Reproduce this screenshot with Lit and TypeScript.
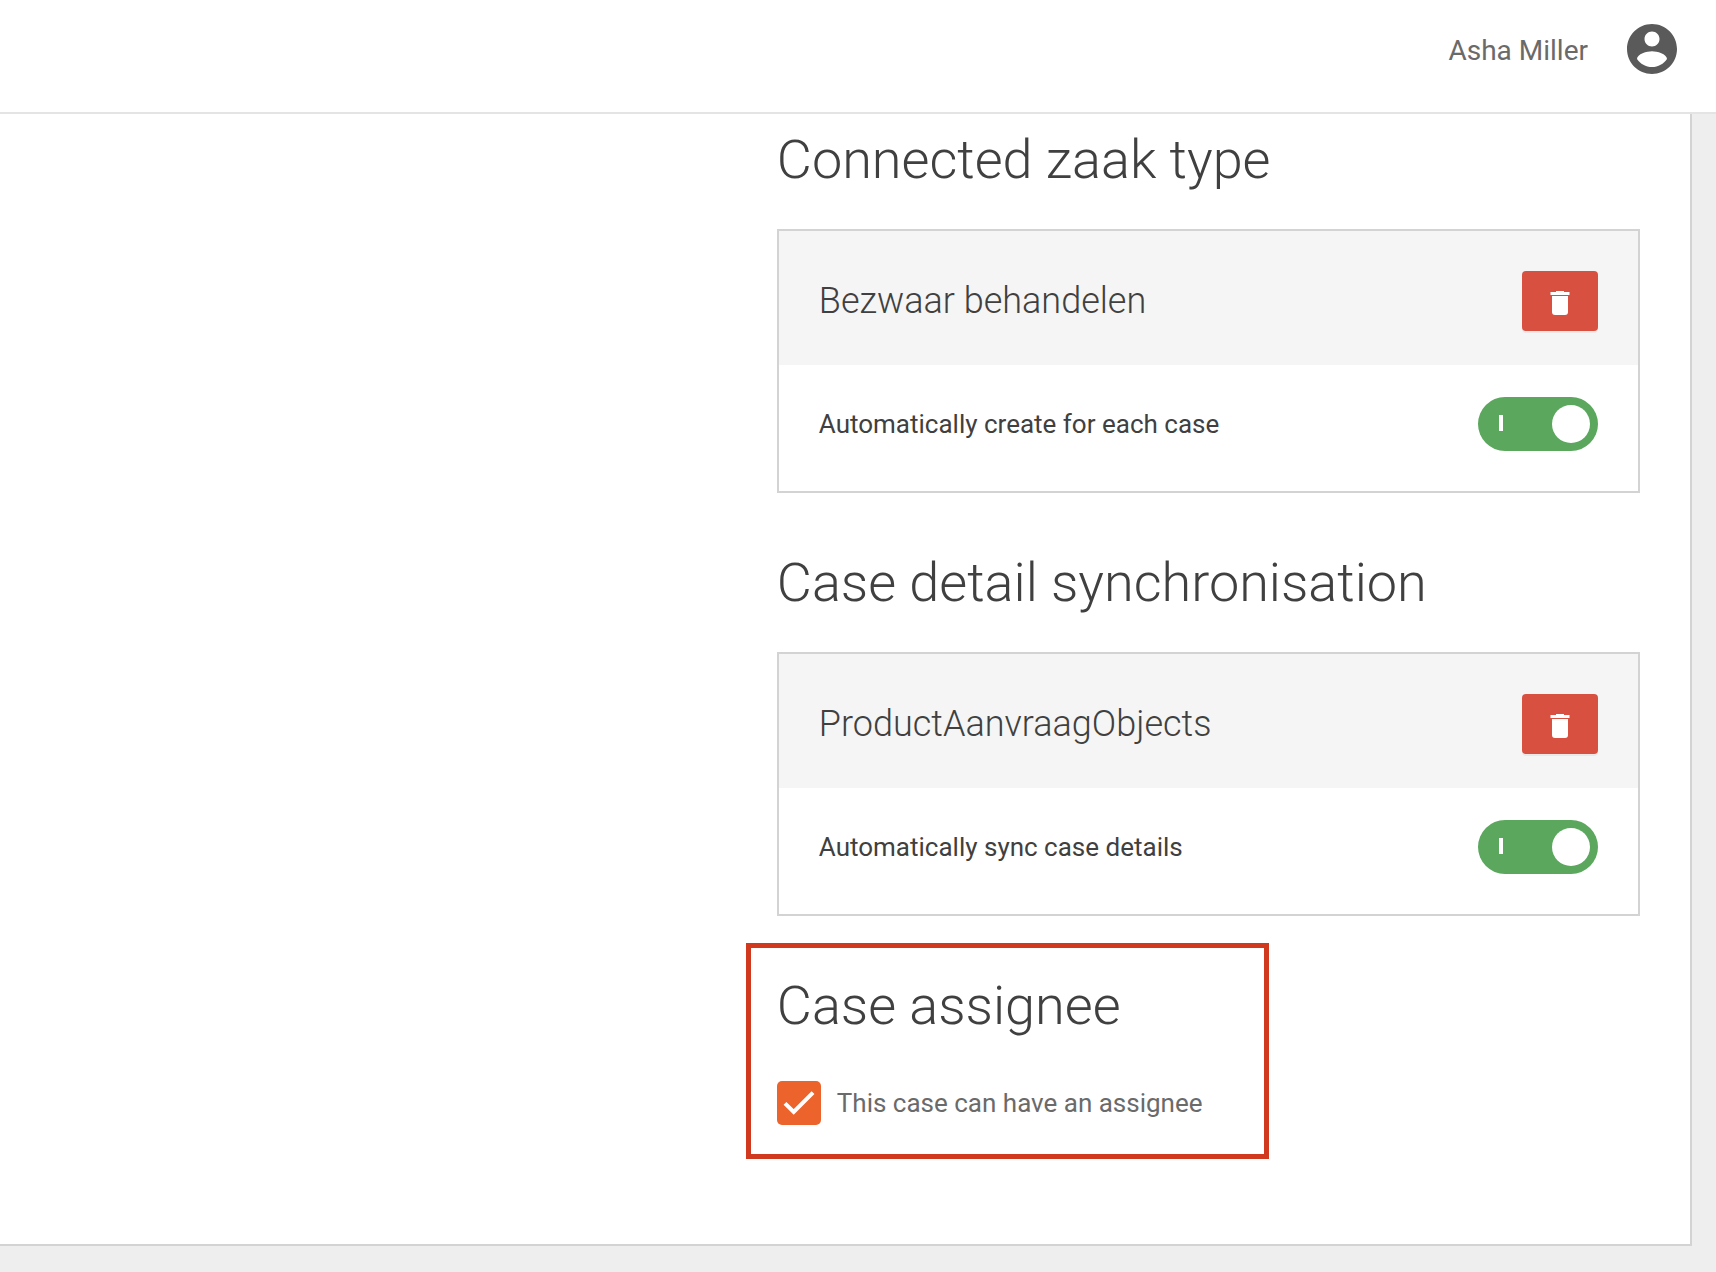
import { LitElement, html, css } from "lit";
import { customElement, property } from "lit/decorators.js";

@customElement("setting-card")
class SettingCard extends LitElement {
  @property() name = "";
  @property() option = "";

  static styles = css`
    :host {
      display: block;
      border: 2px solid #d3d3d3;
      background: #fff;
    }
    .head {
      display: flex;
      align-items: center;
      justify-content: space-between;
      padding: 40px 40px 34px;
      background: #f5f5f5;
    }
    .name {
      margin: 0;
      padding-bottom: 1px;
      font-size: 36px;
      font-weight: 300;
      line-height: 48px;
    }
    .remove {
      display: flex;
      align-items: center;
      justify-content: center;
      width: 76px;
      height: 60px;
      padding: 4px 0 0;
      border: 0;
      border-radius: 4px;
      background: #d85140;
      box-shadow: 0 2px 0 rgba(0, 0, 0, 0.05);
      cursor: pointer;
    }
    .trash {
      width: 20px;
      height: 24px;
      fill: #fff;
    }
    .body {
      display: flex;
      align-items: center;
      justify-content: space-between;
      padding: 32px 40px 40px;
    }
    .option {
      padding-bottom: 1px;
      font-size: 26px;
      line-height: 36px;
    }
    .switch {
      appearance: none;
      display: flex;
      align-items: center;
      justify-content: space-between;
      box-sizing: border-box;
      width: 120px;
      height: 54px;
      margin: 0;
      padding: 0 8px 0 21px;
      border-radius: 27px;
      background: #b5b5b5;
      cursor: pointer;
    }
    .switch:checked {
      background: #5aa75d;
    }
    .switch::before {
      content: "";
      width: 4px;
      height: 16px;
      margin-bottom: 2px;
      background: #fff;
    }
    .switch::after {
      content: "";
      width: 38px;
      height: 38px;
      border-radius: 50%;
      background: #fff;
    }
    .switch:not(:checked) {
      flex-direction: row-reverse;
      padding: 0 21px 0 8px;
    }
  `;

  render() {
    return html`
      <div class="head">
        <h3 class="name">${this.name}</h3>
        <button class="remove" type="button" aria-label="Delete">
          <svg class="trash" viewBox="0 0 20 24" aria-hidden="true">
            <path d="M6 0h8v1h5.500v3H.5V1H6z" />
            <path d="M2 5h16v16a3 3 0 0 1-3 3H5a3 3 0 0 1-3-3z" />
          </svg>
        </button>
      </div>
      <div class="body">
        <label class="option" for="toggle">${this.option}</label>
        <input class="switch" id="toggle" type="checkbox" role="switch" checked />
      </div>
    `;
  }
}

@customElement("app-root")
class AppRoot extends LitElement {
  static styles = css`
    :host {
      display: flex;
      flex-direction: column;
      min-height: 100vh;
      background: #eee;
      color: #404040;
      font-family: Roboto, "Liberation Sans", sans-serif;
    }
    .topbar {
      display: flex;
      align-items: center;
      justify-content: flex-end;
      gap: 39px;
      padding: 24px 39px 38px;
      border-bottom: 2px solid #e4e4e4;
      background: #fff;
      color: #6a6a6a;
      font-size: 28px;
      line-height: 36px;
    }
    .user {
      padding-top: 4px;
    }
    .avatar {
      width: 50px;
      height: 50px;
      fill: #5a5a5a;
    }
    .panel {
      flex: 1;
      display: grid;
      grid-template-columns: 9fr 10fr;
      margin: 0 24px 26px 0;
      padding: 14px 50px 50px 0;
      border: solid #d3d3d3;
      border-width: 0 2px 2px 0;
      background: #fff;
    }
    .settings {
      grid-column: 2;
    }
    .group {
      margin-bottom: 58px;
    }
    .title {
      margin: 0 0 37px;
      font-size: 54px;
      font-weight: 300;
      line-height: 64px;
    }
    .marked {
      width: fit-content;
      margin: -31px 0 0 -31px;
      padding: 26px 61px 29px 26px;
      border: 5px solid #d1391f;
    }
    .marked .title {
      margin-bottom: 43px;
    }
    .check {
      display: flex;
      align-items: center;
      gap: 16px;
      color: #6a6a6a;
      font-size: 26px;
      line-height: 36px;
    }
    .box {
      display: grid;
      place-items: center;
    }
    .tick,
    .mark {
      grid-area: 1 / 1;
    }
    .tick {
      appearance: none;
      width: 44px;
      height: 44px;
      margin: 0;
      border-radius: 5px;
      background: #ec642b;
      cursor: pointer;
    }
    .mark {
      width: 44px;
      height: 44px;
      fill: none;
      stroke: #fff;
      stroke-width: 4;
      pointer-events: none;
    }
    .tick:not(:checked) + .mark {
      visibility: hidden;
    }
  `;

  render() {
    return html`
      <header class="topbar">
        <span class="user">Asha Miller</span>
        <svg class="avatar" viewBox="2 2 20 20" aria-hidden="true">
          <path
            d="M12 2C6.480 2 2 6.480 2 12s4.480 10 10 10 10-4.480 10-10S17.520 2 12 2zm0 3c1.660 0 3 1.340 3 3s-1.340 3-3 3-3-1.340-3-3 1.340-3 3-3zm0 14.200c-2.500 0-4.710-1.280-6-3.220.03-1.990 4-3.080 6-3.080 1.990 0 5.970 1.090 6 3.080-1.290 1.940-3.500 3.220-6 3.220z"
          />
        </svg>
      </header>
      <main class="panel">
        <div class="settings">
          <section class="group">
            <h2 class="title">Connected zaak type</h2>
            <setting-card
              name="Bezwaar behandelen"
              option="Automatically create for each case"
            ></setting-card>
          </section>
          <section class="group">
            <h2 class="title">Case detail synchronisation</h2>
            <setting-card
              name="ProductAanvraagObjects"
              option="Automatically sync case details"
            ></setting-card>
          </section>
          <section class="marked">
            <h2 class="title">Case assignee</h2>
            <div class="check">
              <span class="box">
                <input class="tick" id="assignee" type="checkbox" checked />
                <svg class="mark" viewBox="0 0 44 44" aria-hidden="true">
                  <path d="M8 22.300 16.700 31 36 11.700" />
                </svg>
              </span>
              <label for="assignee">This case can have an assignee</label>
            </div>
          </section>
        </div>
      </main>
    `;
  }
}
